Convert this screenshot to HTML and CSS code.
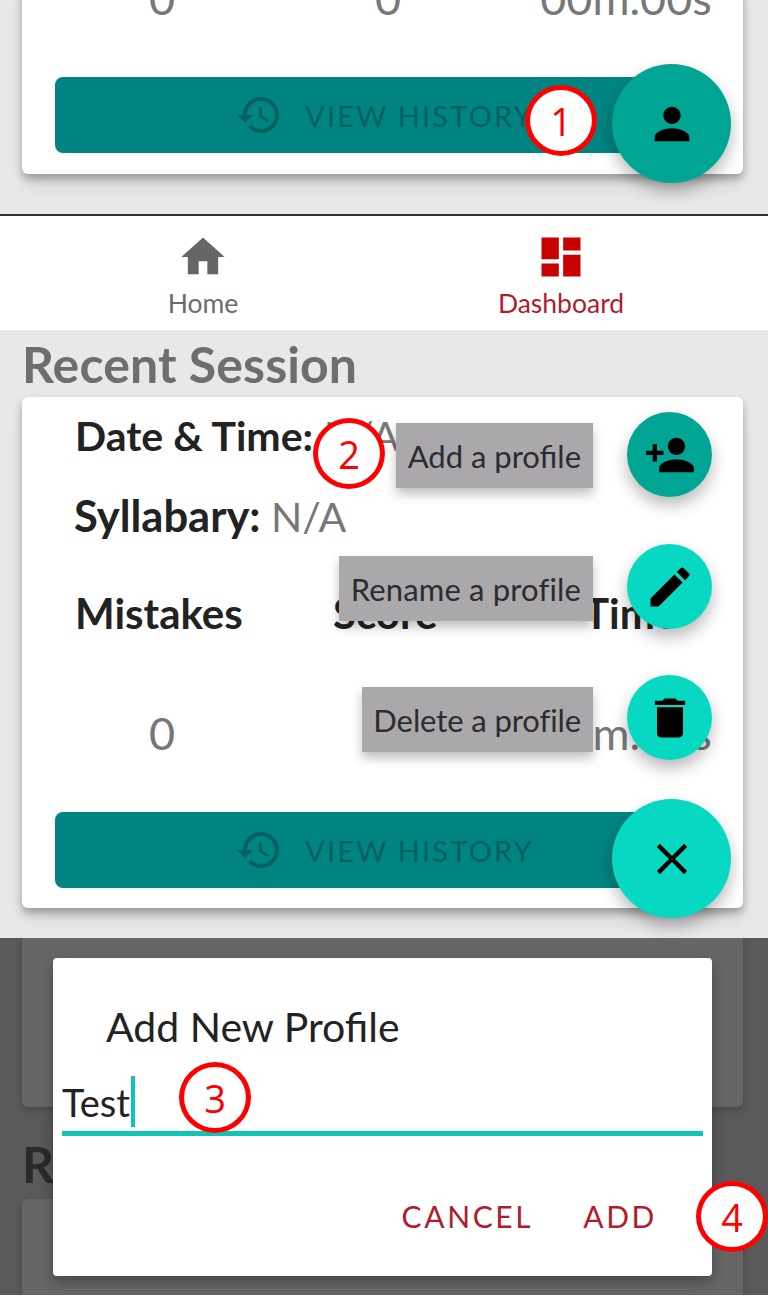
FILE: index.html
```html
<!DOCTYPE html>
<html lang="en">
<head>
<meta charset="utf-8">
<title>Profiles</title>
<link rel="stylesheet" href="styles.css">
</head>
<body>
<main class="screen">
  <section class="panel panel-top">
    <div class="card">
      <div class="stats stats-values"><span>0</span><span>0</span><span>00m.00s</span></div>
      <button class="history"><svg class="history-icon" viewBox="0 0 24 24"><path d="M13 3c-4.97 0-9 4.03-9 9H1l3.89 3.89.07.14L9 12H6c0-3.87 3.13-7 7-7s7 3.13 7 7-3.13 7-7 7c-1.93 0-3.68-.79-4.94-2.06l-1.42 1.42C8.27 19.99 10.51 21 13 21c4.97 0 9-4.03 9-9s-4.03-9-9-9zm-1 5v5l4.28 2.54.72-1.21-3.5-2.08V8h-1.5z"/></svg>VIEW HISTORY</button>
    </div>
    <div class="fab fab-main fab-dark fab-top"><svg viewBox="0 0 24 24"><path d="M12 12c2.21 0 4-1.79 4-4s-1.79-4-4-4-4 1.79-4 4 1.79 4 4 4zm0 2c-2.67 0-8 1.34-8 4v2h16v-2c0-2.66-5.33-4-8-4z"/></svg></div>
    <div class="mark mark-1">1</div>
  </section>

  <nav class="nav">
    <div class="nav-item"><svg viewBox="0 0 24 24"><path d="M10 20v-6h4v6h5v-8h3L12 3 2 12h3v8z"/></svg><span>Home</span></div>
    <div class="nav-item nav-active"><svg viewBox="0 0 24 24"><path d="M3 13h8V3H3v10zm0 8h8v-6H3v6zm10 0h8V11h-8v10zm0-18v6h8V3h-8z"/></svg><span>Dashboard</span></div>
  </nav>

  <section class="panel panel-mid">
    <h2 class="heading">Recent Session</h2>
    <div class="card">
      <p class="line line-date"><b>Date &amp; Time:</b> N/A</p>
      <p class="line line-syllabary"><b>Syllabary:</b> N/A</p>
      <div class="stats stats-head"><b>Mistakes</b><b>Score</b><b>Time</b></div>
      <div class="stats stats-values"><span>0</span><span>0</span><span>00m.00s</span></div>
      <button class="history"><svg class="history-icon" viewBox="0 0 24 24"><path d="M13 3c-4.97 0-9 4.03-9 9H1l3.89 3.89.07.14L9 12H6c0-3.87 3.13-7 7-7s7 3.13 7 7-3.13 7-7 7c-1.93 0-3.68-.79-4.94-2.06l-1.42 1.42C8.27 19.99 10.51 21 13 21c4.97 0 9-4.03 9-9s-4.03-9-9-9zm-1 5v5l4.28 2.54.72-1.21-3.5-2.08V8h-1.5z"/></svg>VIEW HISTORY</button>
    </div>
    <div class="tip tip-add">Add a profile</div>
    <div class="tip tip-rename">Rename a profile</div>
    <div class="tip tip-delete">Delete a profile</div>
    <div class="fab fab-mini fab-dark fab-add"><svg viewBox="0 0 24 24"><path d="M15 12c2.21 0 4-1.79 4-4s-1.79-4-4-4-4 1.79-4 4 1.79 4 4 4zm-9-2V7H4v3H1v2h3v3h2v-3h3v-2H6zm9 4c-2.67 0-8 1.34-8 4v2h16v-2c0-2.66-5.33-4-8-4z"/></svg></div>
    <div class="fab fab-mini fab-light fab-edit"><svg viewBox="0 0 24 24"><path d="M3 17.25V21h3.75L17.81 9.94l-3.75-3.75L3 17.25zM20.71 7.04c.39-.39.39-1.02 0-1.41l-2.34-2.34c-.39-.39-1.02-.39-1.41 0l-1.83 1.83 3.75 3.75 1.83-1.83z"/></svg></div>
    <div class="fab fab-mini fab-light fab-trash"><svg viewBox="0 0 24 24"><path d="M6 19c0 1.1.9 2 2 2h8c1.1 0 2-.9 2-2V7H6v12zM19 4h-3.5l-1-1h-5l-1 1H5v2h14V4z"/></svg></div>
    <div class="fab fab-main fab-light fab-close"><svg viewBox="0 0 24 24"><path d="M19 6.41L17.59 5 12 10.59 6.41 5 5 6.41 10.59 12 5 17.59 6.41 19 12 13.41 17.59 19 19 17.59 13.41 12 19 6.41z"/></svg></div>
    <div class="mark mark-2">2</div>
  </section>

  <section class="panel panel-dim">
    <div class="dim-card dim-card-top"></div>
    <h2 class="dim-heading">Recent Session</h2>
    <div class="dim-card dim-card-bottom"></div>
    <div class="dialog">
      <h3 class="dialog-title">Add New Profile</h3>
      <div class="field"><span class="field-text">Test</span><span class="caret"></span></div>
      <div class="dialog-actions"><span>CANCEL</span><span>ADD</span></div>
    </div>
    <div class="mark mark-3">3</div>
    <div class="mark mark-4">4</div>
  </section>
</main>
</body>
</html>
```
FILE: styles.css
```css
* { box-sizing: border-box; }
html, body { margin: 0; padding: 0; background: #fff; }
body { font-family: Lato, "Open Sans", sans-serif; color: #222; }
.screen { width: 768px; height: 1297px; display: flex; flex-direction: column; overflow: hidden; }
.panel { position: relative; overflow: hidden; background: #e8e7ea; }

.panel-top { height: 214px; flex: none; display: flex; flex-direction: column; justify-content: flex-end; padding: 0 25px 40px 22px; }
.panel-mid { height: 608px; flex: none; padding: 0 25px 0 22px; }
.panel-dim { height: 357px; flex: none; background: #59595b; padding: 0 25px 0 22px; }

.card { background: #fff; border-radius: 6px; box-shadow: 0 5px 8px rgba(0,0,0,.3), 0 16px 20px -4px rgba(0,0,0,.07); padding: 0 0 21px 33px; width: 721px; flex: none; }
.panel-mid .card { height: 511px; }
.heading { margin: 0; height: 67px; padding-top: 6px; font-size: 50px; line-height: 56px; font-weight: 700; color: #6e6d70; letter-spacing: 0.1px; white-space: nowrap; }

.line { margin: 0 0 0 20px; font-size: 41px; line-height: 48px; color: #777; white-space: nowrap; }
.line b { color: #222; font-weight: 700; }
.line-date { padding-top: 15px; height: 64px; }
.line-syllabary { padding-top: 30px; height: 78px; margin-left: 19px; }
.line-syllabary b { font-size: 43.5px; }

.stats { display: grid; font-size: 42px; line-height: 48px; }
.stats-head { margin-left: 20px; padding-top: 50px; height: 100px; grid-template-columns: 258px 251px 1fr; }
.stats-head b { font-weight: 700; color: #222; }
.stats-values { color: #777; text-align: center; font-size: 45px; height: 48px; margin-bottom: 55px; grid-template-columns: 214px 238px 238px; }
.panel-mid .stats-values { margin-top: 70px; }

.history { display: flex; align-items: center; justify-content: center; gap: 22px; width: 655px; height: 76px; border: 0; border-radius: 8px; background: #008482; color: #05605f; font: 400 29px Lato, sans-serif; letter-spacing: 2.2px; padding: 0 0 0 4px; }
.history-icon { width: 48px; height: 48px; fill: #05605f; flex: none; }

.fab { position: absolute; border-radius: 50%; display: flex; align-items: center; justify-content: center; box-shadow: 0 8px 16px rgba(0,0,0,.28); }
.fab svg { fill: #000; }
.fab-main { width: 119px; height: 119px; left: 612px; }
.fab-main svg { width: 52px; height: 52px; }
.fab-mini { width: 85px; height: 85px; left: 627px; }
.fab-mini svg { width: 52px; height: 52px; }
.fab-dark { background: #00a593; }
.fab-light { background: #06d8c2; }
.fab-top { top: 64px; }
.fab-add { top: 82px; }
.fab-edit { top: 214px; }
.fab-trash { top: 345px; }
.fab-close { top: 469px; }

.tip { position: absolute; right: 175px; height: 65px; padding: 0 12px; display: flex; align-items: center; background: #aaa8ab; color: #2c2c2e; font-size: 31px; box-shadow: 0 6px 10px rgba(0,0,0,.25); }
.tip-add { top: 93px; }
.tip-rename { top: 226px; letter-spacing: 0.15px; }
.tip-delete { top: 357px; padding-left: 11px; letter-spacing: -0.1px; }

.mark { position: absolute; width: 72px; height: 71px; border: 5px solid #f00; border-radius: 50%; background: #fff; color: #f00; font: 400 38px "Open Sans", sans-serif; display: flex; align-items: center; justify-content: center; }
.mark-1 { left: 525px; top: 85px; }
.mark-2 { left: 313px; top: 88px; }
.mark-3 { left: 179px; top: 124px; }
.mark-4 { left: 696px; top: 243px; }

.nav { height: 116px; flex: none; background: #fff; border-top: 2px solid #333; display: grid; grid-template-columns: 406px 310px; }
.nav-item { display: flex; flex-direction: column; align-items: center; color: #6b6b6b; font-size: 26.5px; line-height: 30px; padding-top: 15px; }
.nav-item svg { width: 52px; height: 52px; fill: #666; margin-bottom: 5px; }
.nav-active { color: #b01c2e; }
.nav-active svg { fill: #c80000; }

.dim-card { background: #666; border-radius: 6px; width: 721px; box-shadow: 0 3px 6px rgba(0,0,0,.2); }
.dim-card-top { height: 169px; border-radius: 0 0 6px 6px; }
.dim-heading { margin: 29px 0 7px; height: 56px; font-size: 50px; line-height: 56px; color: #2a2a2a; white-space: nowrap; overflow: hidden; }
.dim-card-bottom { height: 120px; }

.dialog { position: absolute; left: 53px; top: 20px; width: 659px; height: 318px; background: #fff; border-radius: 4px; box-shadow: 0 6px 14px rgba(0,0,0,.3); padding: 0 9px; display: flex; flex-direction: column; }
.dialog-title { margin: 0 0 0 44px; padding-top: 44px; height: 96px; font-size: 41px; line-height: 50px; font-weight: 400; color: #222; }
.field { height: 82px; display: flex; align-items: flex-end; border-bottom: 5px solid #10c5b5; padding-bottom: 4px; }
.field-text { font-size: 38px; line-height: 46px; color: #222; margin-bottom: 2px; }
.caret { width: 4px; height: 51px; background: #10c5b5; margin-left: 1px; }
.dialog-actions { display: flex; justify-content: flex-end; gap: 50px; padding: 62px 46px 0 0; font-size: 30px; line-height: 36px; letter-spacing: 2.6px; color: #b01c2e; }
```
